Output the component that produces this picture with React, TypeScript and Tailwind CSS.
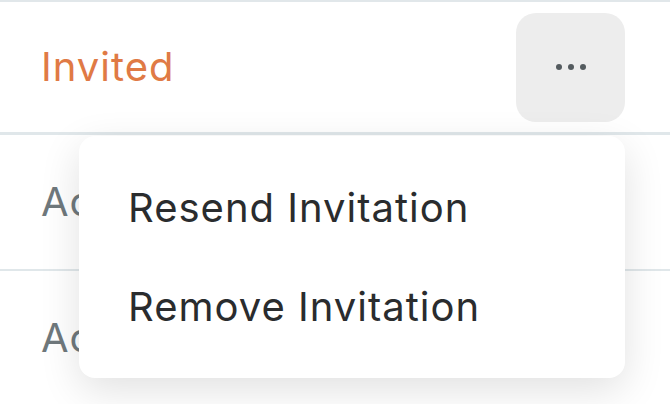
import React from "react";

function DotsIcon() {
  return (
    <svg width="32" height="8" viewBox="0 0 32 8" aria-hidden>
      <circle cx="4" cy="4" r="3" fill="#545b5f" />
      <circle cx="16" cy="4" r="3" fill="#545b5f" />
      <circle cx="28" cy="4" r="3" fill="#545b5f" />
    </svg>
  );
}

const menuItems = ["Resend Invitation", "Remove Invitation"];

export default function App() {
  return (
    <div className="relative h-[404px] w-[670px] overflow-hidden bg-white font-['Inter',sans-serif] text-[40px] leading-none tracking-[1px]">
      <div className="border-t-2 border-[#e1e7ea]" />

      {/* row: invited member */}
      <div className="flex h-[133px] items-center justify-between border-b-[3px] border-[#e0e7ea] pl-[41px] pr-[45px]">
        <span className="text-[#e07a45]">Invited</span>
        <button className="flex h-[109px] w-[109px] items-center justify-center rounded-[20px] bg-[#ededed]">
          <DotsIcon />
        </button>
      </div>

      <div className="flex h-[136px] items-center border-b-2 border-[#e0e7ea] pl-[41px]">
        <span className="text-[#6f787c]">Active</span>
      </div>

      <div className="flex h-[134px] items-center pl-[41px]">
        <span className="text-[#6f787c]">Active</span>
      </div>

      {/* dropdown menu */}
      <div className="absolute left-[79px] top-[136px] w-[546px] rounded-[16px] bg-white py-[22px] shadow-[0_12px_40px_rgba(0,0,0,0.12)]">
        {menuItems.map((item) => (
          <div
            key={item}
            className="flex h-[99px] items-center pl-[49px] text-[#2a2c2e]"
          >
            {item}
          </div>
        ))}
      </div>
    </div>
  );
}
